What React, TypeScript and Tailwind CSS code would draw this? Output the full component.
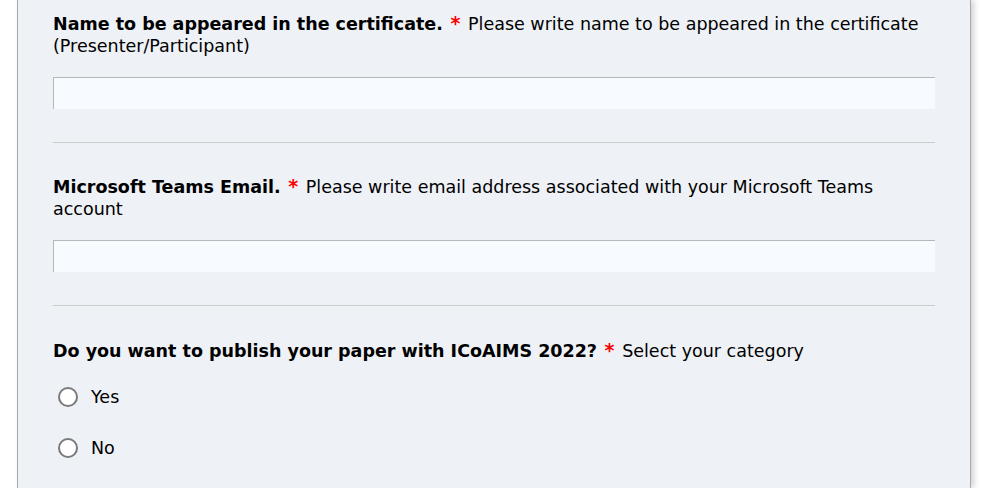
import React from "react";

// 表单字段：粗体标题 + 红色星号 + 说明文字
const FieldLabel: React.FC<{ title: string; hint: string }> = ({ title, hint }) => (
  <p className="text-[17.5px] leading-[22px] text-black">
    <span className="font-bold">{title}</span>{" "}
    <span className="mx-[2px] text-[19px] leading-none font-bold text-[#ff0000]">*</span> {hint}
  </p>
);

const TextField: React.FC = () => (
  <input
    type="text"
    className="mt-5 block h-8 w-full border-t border-l border-[#b7b7b7] bg-[#f7faff] outline-none"
  />
);

const Radio: React.FC<{ label: string }> = ({ label }) => (
  <label className="flex h-[22px] items-center gap-[13px] pl-[5px]">
    <span className="block h-5 w-5 rounded-full border-2 border-[#7a7a7a] bg-white" />
    <span className="text-[17.5px] text-black">{label}</span>
  </label>
);

export default function App() {
  return (
    <div className="flex h-[488px] overflow-hidden bg-white font-['DejaVu_Sans',Verdana,sans-serif]">
      <div className="ml-[17px] h-full w-[954px] border-x border-[#aaaaaa] bg-[#eef1f6] px-[35px] pt-[13px] shadow-[3px_0_6px_rgba(0,0,0,0.18)]">
        <section>
          <FieldLabel
            title="Name to be appeared in the certificate."
            hint="Please write name to be appeared in the certificate (Presenter/Participant)"
          />
          <TextField />
        </section>

        <hr className="mt-[33px] border-t border-[#cccccc]" />

        <section className="mt-[33px]">
          <FieldLabel
            title="Microsoft Teams Email."
            hint="Please write email address associated with your Microsoft Teams account"
          />
          <TextField />
        </section>

        <hr className="mt-[33px] border-t border-[#cccccc]" />

        <section className="mt-[34px]">
          <FieldLabel
            title="Do you want to publish your paper with ICoAIMS 2022?"
            hint="Select your category"
          />
          <div className="mt-[24px] flex flex-col gap-[29px]">
            <Radio label="Yes" />
            <Radio label="No" />
          </div>
        </section>
      </div>
    </div>
  );
}
